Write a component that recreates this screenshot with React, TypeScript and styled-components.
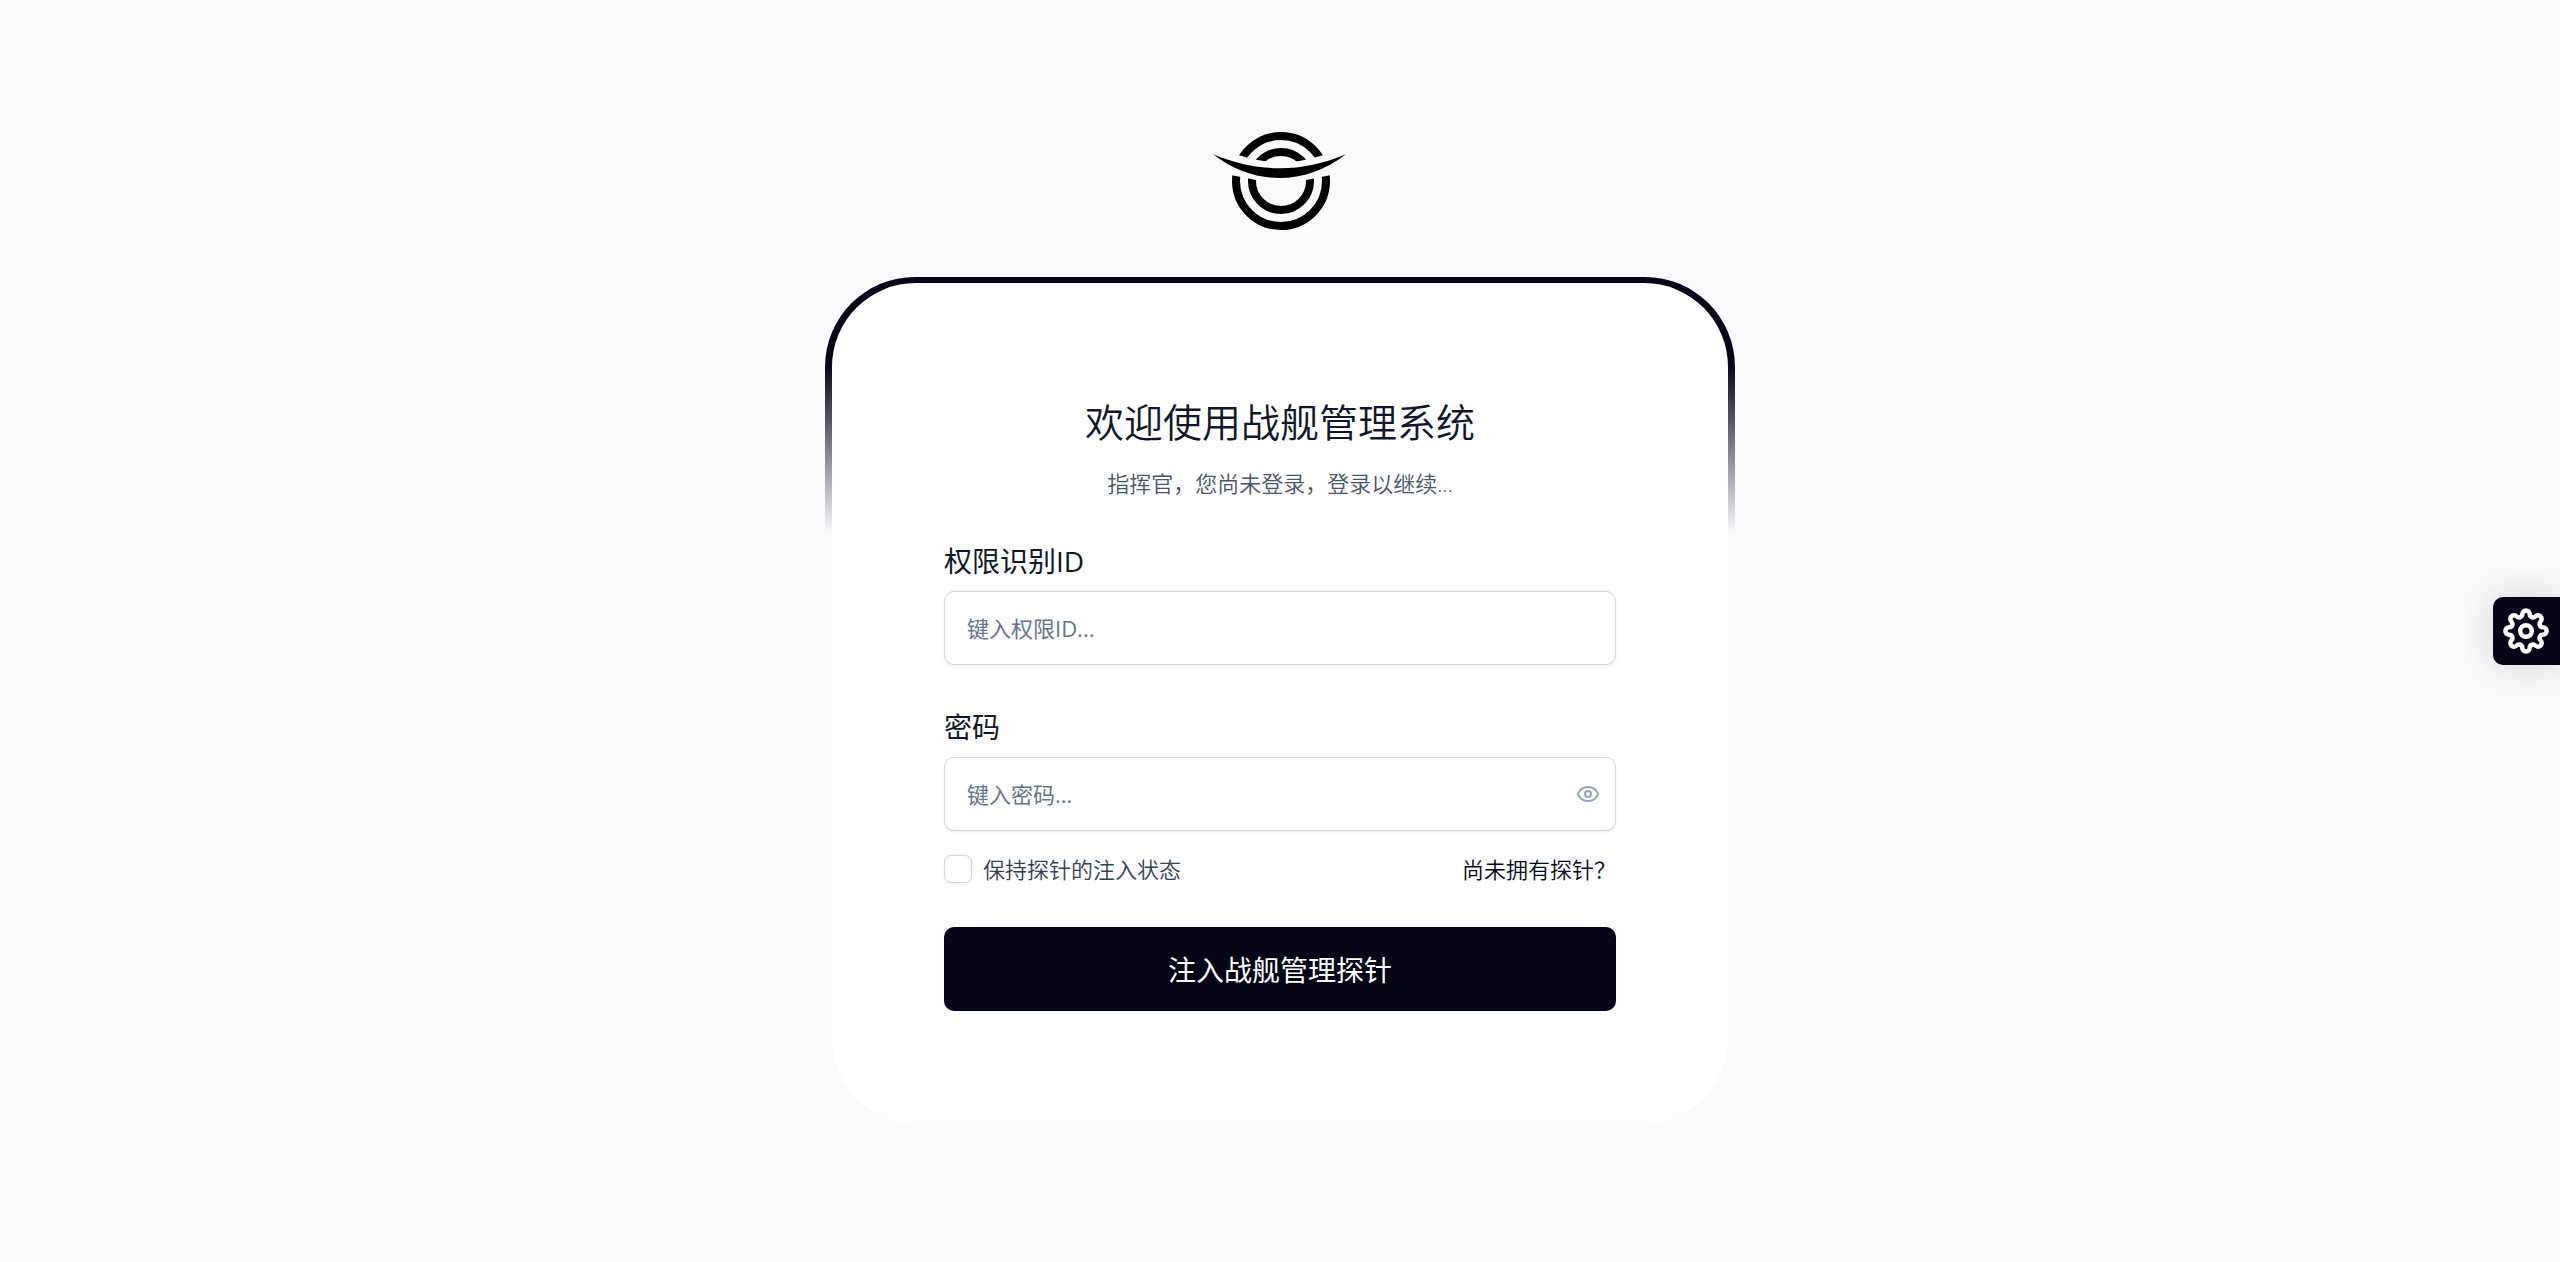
import React from "react";
import styled, { createGlobalStyle } from "styled-components";
import { Eye } from "lucide-react";

const GlobalStyle = createGlobalStyle`
  *, *::before, *::after { box-sizing: border-box; }
  body {
    margin: 0;
    background: #f8fafc;
    color: #0f172a;
    font-family: "Open Sans", "Noto Sans CJK SC", sans-serif;
    font-size: 22px;
    line-height: 32px;
    font-weight: 350;
  }
  button, input { font: inherit; color: inherit; }
`;

const Page = styled.main`
  min-height: 100vh;
  display: flex;
  flex-direction: column;
  align-items: center;
  justify-content: center;
  gap: 52px;
  padding: 24px 24px 32px;
`;

const Logo = styled.svg`
  display: block;
  width: 134px;
  height: 100px;
`;

const Card = styled.section`
  position: relative;
  width: 100%;
  max-width: 896px;
  padding: 112px;
  border-radius: 84px;
  isolation: isolate;

  &::before {
    content: "";
    position: absolute;
    z-index: -2;
    inset: -6px -7px auto;
    height: 256px;
    border-radius: 90px 90px 0 0;
    background: linear-gradient(#020617 34%, transparent);
  }

  &::after {
    content: "";
    position: absolute;
    z-index: -1;
    inset: 0;
    border-radius: inherit;
    background: #ffffff;
  }
`;

const Title = styled.h1`
  margin: 0 0 18px;
  font-size: 39px;
  line-height: 54px;
  font-weight: 350;
  text-align: center;
`;

const Subtitle = styled.p`
  margin: 0;
  color: #475569;
  text-align: center;
`;

const Form = styled.form`
  display: flex;
  flex-direction: column;
  margin-top: 42px;
`;

const Field = styled.div`
  display: flex;
  flex-direction: column;
  gap: 10px;
  & + & { margin-top: 42px; }
`;

const Label = styled.label`
  font-size: 28px;
  line-height: 40px;
  font-weight: 400;
`;

const InputWrap = styled.div`
  position: relative;
`;

const Input = styled.input`
  display: block;
  width: 100%;
  height: 74px;
  padding: 0 22px;
  border: 1px solid #cbd5e1;
  border-radius: 10px;
  outline: none;
  background: #ffffff;
  box-shadow: 0 2px 4px rgba(0, 0, 0, 0.05);
  font-weight: 400;
  &::placeholder { color: #64748b; opacity: 1; }
`;

const Reveal = styled.button`
  position: absolute;
  inset: 0 16px 0 auto;
  display: flex;
  align-items: center;
  padding: 0;
  border: 0;
  background: none;
  color: #94a3b8;
`;

const Options = styled.div`
  display: flex;
  align-items: center;
  justify-content: space-between;
  margin: 22px 0 42px;
`;

const Remember = styled.label`
  display: flex;
  align-items: center;
  gap: 11px;
  color: #334155;
`;

const Checkbox = styled.input`
  appearance: none;
  width: 28px;
  height: 28px;
  margin: 0;
  border: 1px solid #cbd5e1;
  border-radius: 7px;
  background: #ffffff;
  box-shadow: 0 2px 4px rgba(0, 0, 0, 0.05);
  &:checked { background: #020617; }
`;

const Link = styled.a`
  color: #020617;
  text-decoration: none;
`;

const Submit = styled.button`
  height: 84px;
  padding: 2px 0 0;
  border: 0;
  border-radius: 10px;
  background: #020617;
  color: #ffffff;
  font-size: 28px;
  font-weight: 400;
`;

const Settings = styled.button`
  position: fixed;
  right: 0;
  top: 50%;
  transform: translateY(-50%);
  display: flex;
  align-items: center;
  justify-content: center;
  width: 67px;
  height: 68px;
  padding: 0 1px 1px 0;
  border: 0;
  border-radius: 10px 0 0 10px;
  background: #020617;
  color: #ffffff;
  box-shadow: 0 0 36px rgba(0, 0, 0, 0.16);
`;

const teeth = [0, 45, 90, 135, 180, 225, 270, 315];

function GearIcon() {
  return (
    <svg
      width="48"
      height="48"
      viewBox="-24 -24 48 48"
      fill="none"
      stroke="currentColor"
      strokeWidth="4.5"
      strokeLinecap="round"
      aria-hidden="true"
    >
      <circle r="5.8" />
      {teeth.map((angle) => (
        <path
          key={angle}
          transform={`rotate(${angle})`}
          d="M-5.7-13.9C-4.6-14.4-3.7-15.4-3.7-16.8C-3.7-19-2.1-20.6 0-20.6S3.7-19 3.7-16.8C3.7-15.4 4.6-14.4 5.7-13.9"
        />
      ))}
    </svg>
  );
}

export default function App() {
  return (
    <>
      <GlobalStyle />
      <Page>
        <Logo viewBox="0 0 134 100" aria-hidden="true">
          <clipPath id="above-brim">
            <path d="M0 18L27 24.500Q68 38 109 24.500L134 18V0H0Z" />
          </clipPath>
          <clipPath id="below-brim">
            <path d="M0 40L19 44.300L43 49H93L117 44.300L134 40V100H0Z" />
          </clipPath>
          {["above-brim", "below-brim"].map((side) => (
            <g
              key={side}
              clipPath={`url(#${side})`}
              fill="none"
              stroke="#000"
              strokeWidth="8"
            >
              <circle cx="68" cy="50" r="45" />
              <circle cx="68" cy="50" r="29" />
            </g>
          ))}
          <path d="M0 23.300C46 42 88 42 133 23.300C92 55 41 55 0 23.300Z" />
        </Logo>
        <Card>
          <Title>欢迎使用战舰管理系统</Title>
          <Subtitle>指挥官，您尚未登录，登录以继续...</Subtitle>
          <Form onSubmit={(e) => e.preventDefault()}>
            <Field>
              <Label htmlFor="account">权限识别ID</Label>
              <Input id="account" placeholder="键入权限ID..." />
            </Field>
            <Field>
              <Label htmlFor="password">密码</Label>
              <InputWrap>
                <Input id="password" type="password" placeholder="键入密码..." />
                <Reveal type="button" aria-label="显示密码">
                  <Eye size={24} />
                </Reveal>
              </InputWrap>
            </Field>
            <Options>
              <Remember>
                <Checkbox type="checkbox" />
                保持探针的注入状态
              </Remember>
              <Link href="#">尚未拥有探针？</Link>
            </Options>
            <Submit type="submit">注入战舰管理探针</Submit>
          </Form>
        </Card>
      </Page>
      <Settings type="button" aria-label="设置">
        <GearIcon />
      </Settings>
    </>
  );
}
